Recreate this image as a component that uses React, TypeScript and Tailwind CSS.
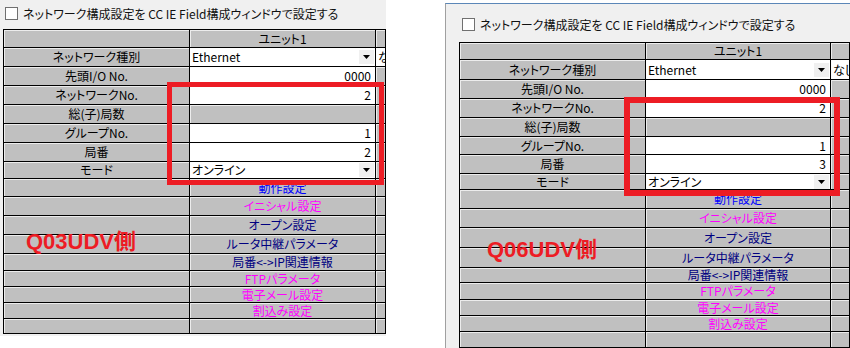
import React from "react";

type Kind = "header" | "select" | "num" | "blank" | "btn" | "empty";
type Row = { label?: string; kind: Kind; value?: string; color?: string; extra?: string };

const jp = "font-['Noto_Sans_CJK_JP','Noto_Sans',sans-serif] [font-feature-settings:'palt']";

function rowsFor(station: string): Row[] {
  return [
    { kind: "header", value: "ユニット1" },
    { label: "ネットワーク種別", kind: "select", value: "Ethernet", extra: "なし" },
    { label: "先頭I/O No.", kind: "num", value: "0000" },
    { label: "ネットワークNo.", kind: "num", value: "2" },
    { label: "総(子)局数", kind: "blank" },
    { label: "グループNo.", kind: "num", value: "1" },
    { label: "局番", kind: "num", value: station },
    { label: "モード", kind: "select", value: "オンライン" },
    { kind: "btn", value: "動作設定", color: "text-[#0000ff]" },
    { kind: "btn", value: "イニシャル設定", color: "text-[#ff00ff]" },
    { kind: "btn", value: "オープン設定", color: "text-[#000080]" },
    { kind: "btn", value: "ルータ中継パラメータ", color: "text-[#000080]" },
    { kind: "btn", value: "局番<->IP関連情報", color: "text-[#000080]" },
    { kind: "btn", value: "FTPパラメータ", color: "text-[#ff00ff]" },
    { kind: "btn", value: "電子メール設定", color: "text-[#ff00ff]" },
    { kind: "btn", value: "割込み設定", color: "text-[#ff00ff]" },
    { kind: "empty" },
  ];
}

// row heights differ a little between the two captures
const LEFT_H = [
  "h-[18px]", "h-[19px]", "h-[19px]", "h-[19px]", "h-[19px]", "h-[19px]", "h-[19px]", "h-[17px]", "h-[18px]",
  "h-[19px]", "h-[19px]", "h-[19px]", "h-[17px]", "h-[16px]", "h-[16px]", "h-[16px]", "h-[15px]",
];
const RIGHT_H = [
  "h-[17px]", "h-[20px]", "h-[19px]", "h-[19px]", "h-[19px]", "h-[18px]", "h-[19px]", "h-[16px]", "h-[19px]",
  "h-[19px]", "h-[20px]", "h-[20px]", "h-[15px]", "h-[17px]", "h-[16px]", "h-[16px]", "h-[16px]",
];

const gray = "bg-[#c0c0c0] shadow-[inset_1px_1px_0_#ececec]";
const cell = "border-r border-b border-black flex items-center whitespace-nowrap";

function Arrow() {
  return (
    <span className="ml-auto mr-[1px] flex h-[14px] w-[15px] shrink-0 items-center justify-center bg-[#f0f0f0]">
      <svg width="7" height="4" viewBox="0 0 7 4">
        <path d="M0 0h7L3.5 4z" fill="#000" />
      </svg>
    </span>
  );
}

function Grid({ rows, heights, col2 }: { rows: Row[]; heights: string[]; col2: string }) {
  return (
    <div className={`border-t border-l border-black text-[12px] leading-none text-black ${jp}`}>
      {rows.map((r, i) => (
        <div key={i} className={`flex ${heights[i]}`}>
          <div className={`${cell} ${gray} w-[186px] shrink-0 justify-center`}>{r.label}</div>
          {r.kind === "header" && <div className={`${cell} ${gray} ${col2} shrink-0 justify-center`}>{r.value}</div>}
          {r.kind === "select" && (
            <div className={`${cell} ${col2} shrink-0 bg-white pl-[2px]`}>
              <span>{r.value}</span>
              <Arrow />
            </div>
          )}
          {r.kind === "num" && <div className={`${cell} ${col2} shrink-0 justify-end bg-white pr-[4px]`}>{r.value}</div>}
          {(r.kind === "blank" || r.kind === "empty") && <div className={`${cell} ${gray} ${col2} shrink-0`} />}
          {r.kind === "btn" && (
            <div className={`${cell} ${gray} ${col2} shrink-0 justify-center ${r.color}`}>{r.value}</div>
          )}
          {r.extra ? (
            <div className={`${cell} min-w-0 flex-1 overflow-x-clip bg-white pl-[2px]`}>{r.extra}</div>
          ) : (
            <div className={`${cell} ${gray} min-w-0 flex-1`} />
          )}
        </div>
      ))}
    </div>
  );
}

function CheckRow() {
  return (
    <div className={`flex h-[13px] items-center gap-[5px] text-[12px] text-[#111] ${jp}`}>
      <span className="h-[13px] w-[13px] shrink-0 border border-[#707070] bg-white" />
      <span className="whitespace-nowrap leading-none">ネットワーク構成設定を CC IE Field構成ウィンドウで設定する</span>
    </div>
  );
}

const tag =
  "absolute font-['Liberation_Sans','Noto_Sans_CJK_JP',sans-serif] text-[22px] font-bold leading-none text-[#ed1c24] whitespace-nowrap";

export default function App() {
  return (
    <div className="relative flex h-[348px] w-[850px] items-start overflow-hidden bg-white">
      {/* left capture */}
      <div className="relative h-[336px] w-[386px] shrink-0 overflow-hidden bg-[#f0f0f0] pl-[3px] pt-[7px]">
        <div className="pl-[2px]">
          <CheckRow />
        </div>
        <div className="mt-[9px]">
          <Grid rows={rowsFor("2")} heights={LEFT_H} col2="w-[186px]" />
        </div>
        <div className="absolute left-[167px] top-[82px] h-[103px] w-[217px] border-[5px] border-[#ed1c24]" />
        <div className={`${tag} left-[26px] top-[231px]`}>Q03UDV側</div>
      </div>

      {/* right capture */}
      <div className="relative ml-[59px] mt-[3px] h-[345px] w-[405px] shrink-0 overflow-hidden border-l border-t border-l-[#a0a0a0] border-t-[#5b87b8] bg-[#f0f0f0] pl-[13px] pt-[14px]">
        <div className="pl-[3px]">
          <CheckRow />
        </div>
        <div className="mt-[11px]">
          <Grid rows={rowsFor("3")} heights={RIGHT_H} col2="w-[185px]" />
        </div>
        <div className="absolute left-[178px] top-[93px] h-[99px] w-[216px] border-[6px] border-[#ed1c24]" />
        <div className={`${tag} left-[41px] top-[235px]`}>Q06UDV側</div>
      </div>
    </div>
  );
}
